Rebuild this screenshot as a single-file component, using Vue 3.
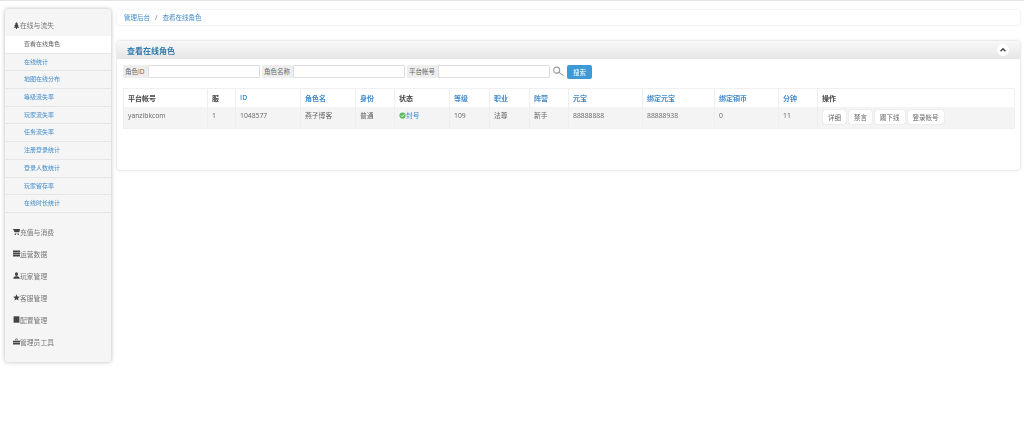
<template>
  <div class="page">
    <aside class="sidebar">
      <div class="nav-title first">
        <svg class="nav-icon" viewBox="0 0 12 12"><path d="M6 0 8.500 3.600H7.400L10 7H8.200L11 10H7V12H5V10H1L3.800 7H2L4.600 3.600H3.500z" /></svg>在线与流失
      </div>
      <ul class="subnav">
        <li
          v-for="(item, i) in subItems"
          :key="item"
          :class="{ active: i === 0 }"
        >{{ item }}</li>
      </ul>
      <div v-for="group in groups" :key="group.label" class="nav-title">
        <svg class="nav-icon" viewBox="0 0 12 12"><path :d="group.icon" /></svg>{{ group.label }}
      </div>
    </aside>

    <main class="content">
      <div class="breadcrumb">
        <a>管理后台</a><span class="sep">/</span><a>查看在线角色</a>
      </div>

      <section class="panel">
        <header class="panel-head">
          <h2>查看在线角色</h2>
          <button class="collapse" aria-label="收起">
            <svg viewBox="0 0 10 10"><path d="M2 6.500 5 3.500 8 6.500" /></svg>
          </button>
        </header>

        <div class="panel-body">
          <form class="search" @submit.prevent>
            <label class="l-id">角色ID</label><input type="text" />
            <label class="l-name">角色名称</label><input type="text" />
            <label class="l-name">平台帐号</label><input type="text" />
            <svg class="magnifier" viewBox="0 0 14 12">
              <circle cx="5" cy="4.500" r="3.300" />
              <path d="M7.500 7 12.500 10.500" />
            </svg>
            <button class="btn-search">搜索</button>
          </form>

          <table class="grid">
            <colgroup>
              <col v-for="col in columns" :key="col.label" :style="{ width: col.width + 'px' }" />
            </colgroup>
            <thead>
              <tr>
                <th v-for="col in columns" :key="col.label" :class="{ sort: col.sort }">{{ col.label }}</th>
              </tr>
            </thead>
            <tbody>
              <tr>
                <td>yanzibkcom</td>
                <td>1</td>
                <td>1048577</td>
                <td>燕子博客</td>
                <td>普通</td>
                <td class="status">
                  <svg viewBox="0 0 10 10">
                    <circle cx="5" cy="5" r="4.400" />
                    <path d="M2.800 5.100 4.400 6.700 7.300 3.600" />
                  </svg>封号
                </td>
                <td>109</td>
                <td>法尊</td>
                <td>新手</td>
                <td>88888888</td>
                <td>88888938</td>
                <td>0</td>
                <td>11</td>
                <td class="ops">
                  <button v-for="op in ops" :key="op">{{ op }}</button>
                </td>
              </tr>
            </tbody>
          </table>
        </div>
      </section>
    </main>
  </div>
</template>

<script setup>
const subItems = [
  '查看在线角色',
  '在线统计',
  '地图在线分布',
  '等级流失率',
  '玩家流失率',
  '任务流失率',
  '注册登录统计',
  '登录人数统计',
  '玩家留存率',
  '在线时长统计'
]

const groups = [
  { label: '充值与消费', icon: 'M0 1.500h12l-1 5.500H2.500zM3 8h7v1H3zM3 10h2v2H3zM8 10h2v2H8z' },
  { label: '运营数据', icon: 'M0 1h12v3H0zM0 4.800h12v3H0zM0 8.500h12V11H0z' },
  { label: '玩家管理', icon: 'M6 .5a2.600 2.600 0 0 1 2.600 2.800C8.600 5 7.600 6.800 6 6.800S3.400 5 3.400 3.300A2.600 2.600 0 0 1 6 .5zM.5 11.500c0-2.500 2-3.800 3.500-4.200h4c1.500.4 3.500 1.700 3.500 4.200z' },
  { label: '客服管理', icon: 'M6 .5l1.700 3.700 4 .4-3 2.700.9 4L6 9.200l-3.600 2.100.9-4-3-2.700 4-.4z' },
  { label: '配置管理', icon: 'M1 .5h10v11H1z' },
  { label: '管理员工具', icon: 'M4 4V3a2 2 0 0 1 4 0v1h-1V3a1 1 0 0 0-2 0v1zM0 4.500h12V7H0zM0 7.600h12V11H0z' }
]

const columns = [
  { label: '平台帐号', width: 84 },
  { label: '服', width: 28 },
  { label: 'ID', width: 65, sort: true },
  { label: '角色名', width: 55, sort: true },
  { label: '身份', width: 39, sort: true },
  { label: '状态', width: 55 },
  { label: '等级', width: 40, sort: true },
  { label: '职业', width: 40, sort: true },
  { label: '阵营', width: 39, sort: true },
  { label: '元宝', width: 74, sort: true },
  { label: '绑定元宝', width: 72, sort: true },
  { label: '绑定铜币', width: 64, sort: true },
  { label: '分钟', width: 39, sort: true },
  { label: '操作', width: 197 }
]

const ops = ['详细', '禁言', '踢下线', '登录帐号']
</script>

<style>
html,
body {
  margin: 0;
  background: #fff;
}
</style>

<style scoped>
.page {
  display: flex;
  align-items: flex-start;
  height: 434px;
  box-sizing: border-box;
  padding: 9px 4px 0 5px;
  gap: 6px;
  border-top: 1px solid #e4e4e4;
  font-family: "Open Sans", "Noto Sans CJK SC", sans-serif;
  font-size: 7px;
  color: #555;
  overflow: hidden;
  filter: blur(0.3px);
}

.sidebar {
  width: 106px;
  height: 353px;
  flex: none;
  margin-top: -1px;
  box-sizing: border-box;
  background: #f5f5f5;
  border-radius: 3px;
  box-shadow: 0 0 4px rgb(0 0 0 / 0.28);
  padding-top: 5px;
}

.nav-title {
  display: flex;
  align-items: center;
  height: 22px;
  padding-left: 8px;
  font-size: 6.800px;
  color: #777;
}

.nav-title.first {
  height: 22px;
}

.nav-icon {
  width: 7px;
  height: 7px;
  fill: #444;
}

.subnav {
  list-style: none;
  margin: 0 0 8px;
  padding: 0;
}

.subnav li {
  height: 17.700px;
  line-height: 17px;
  box-sizing: border-box;
  padding-left: 19px;
  font-size: 6px;
  color: #428bca;
  border-bottom: 1px solid #e6e6e6;
}

.subnav li.active {
  background: #fff;
  color: #666;
}

.content {
  flex: 1;
  min-width: 0;
}

.breadcrumb {
  height: 15px;
  line-height: 15px;
  padding-left: 7px;
  margin-bottom: 16px;
  background: #fff;
  border-radius: 2px;
  box-shadow: 0 0 2px rgb(0 0 0 / 0.16);
  color: #428bca;
  font-size: 6.500px;
}

.breadcrumb .sep {
  margin: 0 5px;
  color: #777;
}

.panel {
  height: 129px;
  background: #fff;
  border-radius: 3px;
  box-shadow: 0 0 3px rgb(0 0 0 / 0.22);
}

.panel-head {
  display: flex;
  align-items: center;
  justify-content: space-between;
  height: 18px;
  padding: 0 11px 0 10px;
  background: linear-gradient(#f8f8f8, #e6e6e6);
  border-radius: 3px 3px 0 0;
}

.panel-head h2 {
  margin: 0;
  font-size: 8px;
  font-weight: 700;
  color: #317eac;
}

.collapse {
  width: 12px;
  height: 12px;
  padding: 0;
  border: 0;
  border-radius: 50%;
  background: #fff;
  display: flex;
  align-items: center;
  justify-content: center;
}

.collapse svg {
  width: 8px;
  height: 8px;
  fill: none;
  stroke: #444;
  stroke-width: 1.800;
}

.panel-body {
  padding: 5px 6px 0;
}

.search {
  display: flex;
  align-items: center;
  height: 15px;
  margin-bottom: 9px;
}

.search label {
  height: 13px;
  line-height: 13px;
  box-sizing: border-box;
  padding-left: 2px;
  background: #eee;
  font-size: 6.500px;
  color: #666;
}

.l-id {
  width: 25px;
}

.l-name {
  width: 31px;
}

.search input {
  width: 112px;
  height: 13px;
  box-sizing: border-box;
  margin: 0 2px 0 0;
  padding: 0;
  border: 1px solid #ddd;
  border-radius: 1px;
  background: #fff;
  outline: none;
}

.magnifier {
  width: 13px;
  height: 11px;
  margin-right: 1px;
  fill: none;
  stroke: #999;
  stroke-width: 1.200;
}

.btn-search {
  width: 25px;
  height: 14px;
  padding: 0;
  margin-left: 1px;
  border: 0;
  border-radius: 2px;
  background: #3d9ad6;
  color: #fff;
  font: inherit;
  font-size: 6.500px;
}

.grid {
  width: 891px;
  table-layout: fixed;
  border-collapse: collapse;
  border: 1px solid #f0f0f0;
}

.grid th,
.grid td {
  box-sizing: border-box;
  padding: 0 0 0 4px;
  border-left: 1px solid #eee;
  text-align: left;
  white-space: nowrap;
}

.grid th {
  height: 18px;
  font-size: 7px;
  font-weight: 600;
  color: #444;
  background: #fff;
}

.grid th.sort {
  color: #428bca;
}

.grid td {
  height: 22px;
  padding-bottom: 4px;
  background: #f4f4f4;
  font-size: 6.800px;
  color: #666;
}

.status {
  color: #428bca !important;
}

.status svg {
  width: 7px;
  height: 7px;
  vertical-align: -1px;
}

.status circle {
  fill: #5cb85c;
}

.status path {
  fill: none;
  stroke: #fff;
  stroke-width: 1.400;
}

.grid td.ops {
  padding: 0 0 0 5px;
}

.ops button {
  height: 14px;
  padding: 0 5px;
  margin-right: 3px;
  border: 0;
  border-radius: 2px;
  background: #fff;
  box-shadow: 0 0 1px rgb(0 0 0 / 0.28);
  color: #666;
  font: inherit;
  font-size: 6.500px;
}
</style>
